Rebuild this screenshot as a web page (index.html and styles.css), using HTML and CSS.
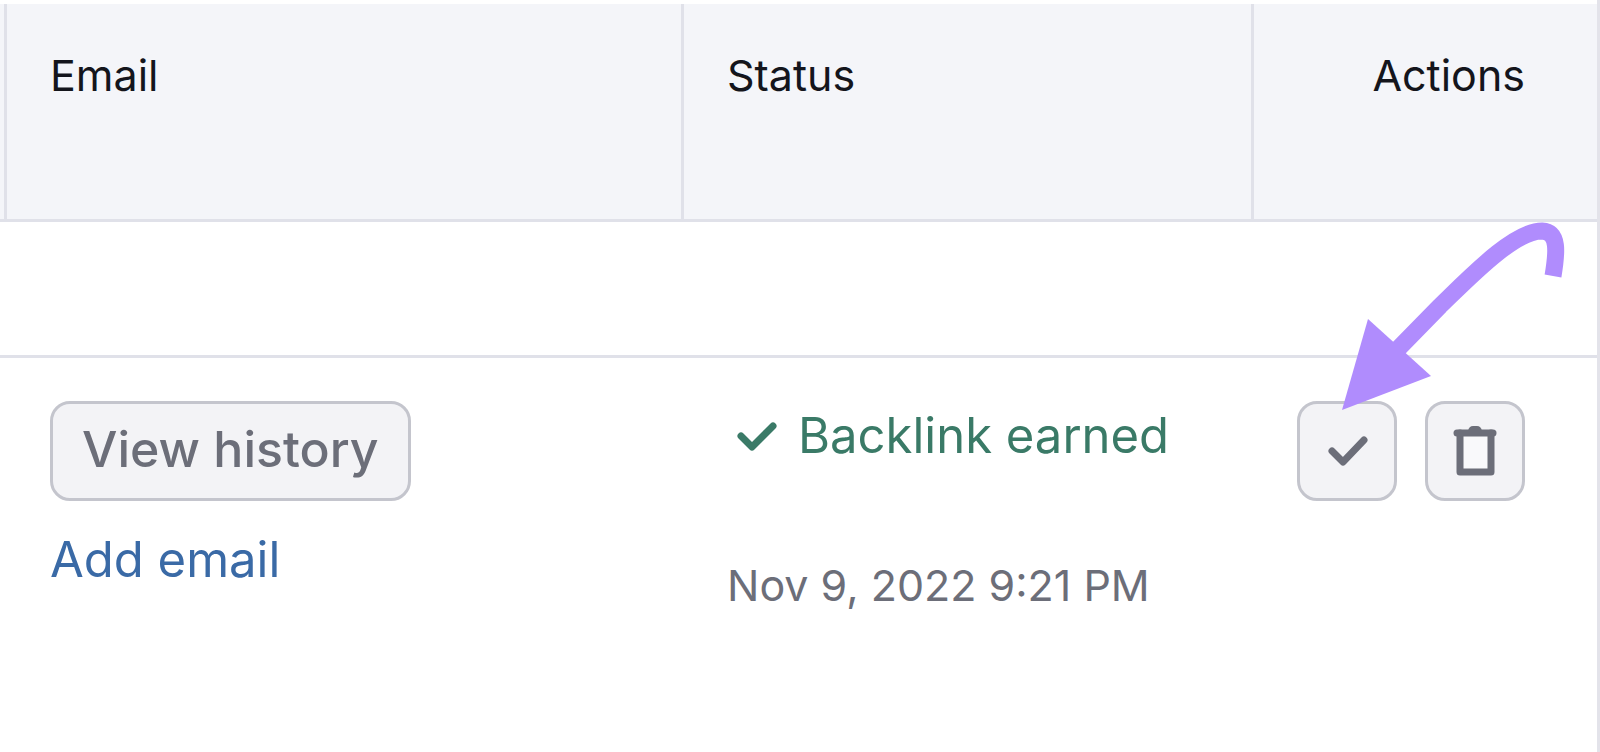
FILE: index.html
```html
<!DOCTYPE html>
<html lang="en">
<head>
  <meta charset="utf-8">
  <title>Prospects</title>
  <link rel="stylesheet" href="styles.css">
</head>
<body>
  <main class="panel">
    <table class="prospects">
      <colgroup>
        <col class="col-edge">
        <col>
        <col class="col-status">
        <col class="col-actions">
      </colgroup>
      <thead>
        <tr>
          <td class="edge"></td>
          <th scope="col">Email</th>
          <th scope="col">Status</th>
          <th scope="col" class="align-end">Actions</th>
        </tr>
      </thead>
      <tbody>
        <tr class="spacer-row">
          <td colspan="4"></td>
        </tr>
        <tr class="data-row">
          <td class="edge"></td>
          <td>
            <div class="stack email-stack">
              <button type="button" class="btn">View history</button>
              <a class="link" href="#add-email">Add email</a>
            </div>
          </td>
          <td>
            <div class="stack status-stack">
              <div class="status">
                <svg class="status-icon" viewBox="0 0 56 60" aria-hidden="true">
                  <path d="M14 30 L25 41 L46 20"/>
                </svg>
                <span>Backlink earned</span>
              </div>
              <time class="date" datetime="2022-11-09T21:21">Nov 9, 2022 9:21 PM</time>
            </div>
          </td>
          <td>
            <div class="actions">
              <button type="button" class="btn btn-icon" aria-label="Mark as earned">
                <svg class="icon" viewBox="0 0 60 60" aria-hidden="true">
                  <path class="check" d="M15 30 L26 41 L47 19"/>
                </svg>
              </button>
              <button type="button" class="btn btn-icon" aria-label="Delete">
                <svg class="icon" viewBox="0 0 60 60" aria-hidden="true">
                  <path class="trash-body" d="M15 12 V51 H46 V12"/>
                  <path class="trash-lid" d="M12 12 H48"/>
                  <path class="trash-handle" d="M23 10 Q24 5 28 5 H32 Q36 5 37 10 Z"/>
                </svg>
              </button>
              <svg class="arrow" viewBox="0 0 228 192" aria-hidden="true">
                <path class="arrow-stem" d="M57 130 L100 86 C130 57 174 11 202 11 C219 12 217 32 213 56"/>
                <path class="arrow-head" d="M2 190 L28 99 L91 156 Z"/>
              </svg>
            </div>
          </td>
        </tr>
      </tbody>
    </table>
  </main>
</body>
</html>
```
FILE: styles.css
```css
* {
  box-sizing: border-box;
}

body {
  margin: 0;
  background: #fff;
  color: #14151c;
  font-family: Inter, "Liberation Sans", sans-serif;
  font-size: 43px;
  line-height: 52px;
}

.panel {
  min-height: 100vh;
  padding-top: 4px;
  border-right: 3px solid #e3e3ea;
}

.prospects {
  width: 100%;
  table-layout: fixed;
  border-collapse: separate;
  border-spacing: 0;
}

.col-edge {
  width: 7px;
}

.col-status {
  width: 570px;
}

.col-actions {
  width: 343px;
}

th,
td {
  padding: 0 43px;
  text-align: left;
  vertical-align: top;
  font-weight: 400;
}

.prospects .edge {
  padding: 0;
}

thead th,
thead td {
  background: #f4f5f9;
  border-right: 3px solid #e0e1e9;
  border-bottom: 3px solid #e0e1e9;
}

thead th {
  height: 218px;
  padding-top: 45px;
}

thead th:last-child {
  border-right: 0;
}

.prospects .align-end {
  padding-right: 72px;
  text-align: right;
}

.spacer-row td {
  height: 136px;
  border-bottom: 3px solid #e0e1e9;
}

.data-row td {
  padding-top: 43px;
}

.stack {
  display: flex;
  flex-direction: column;
  align-items: flex-start;
}

.email-stack {
  gap: 29px;
}

.status-stack {
  gap: 93px;
  padding-top: 5px;
}

.btn {
  height: 100px;
  padding: 0 29px 4px;
  border: 3px solid #c4c5cd;
  border-radius: 20px;
  background: #f3f3f6;
  color: #6c6e79;
  font-family: inherit;
  font-size: 50px;
  font-weight: 500;
  line-height: 60px;
}

.btn-icon {
  display: flex;
  align-items: center;
  justify-content: center;
  width: 100px;
  padding: 0;
}

.icon {
  width: 60px;
  height: 60px;
}

.check,
.trash-body,
.trash-lid {
  fill: none;
  stroke: #6c6e79;
  stroke-width: 7;
  stroke-linecap: round;
  stroke-linejoin: round;
}

.trash-body {
  fill: #f9f9fb;
}

.trash-handle {
  fill: #6c6e79;
}

.link {
  color: #3a6aa6;
  font-size: 49px;
  line-height: 60px;
  text-decoration: none;
}

.status {
  display: flex;
  align-items: center;
  gap: 15px;
  color: #3a7a67;
  font-size: 49px;
  line-height: 60px;
  white-space: nowrap;
}

.status-icon {
  width: 56px;
  height: 60px;
  fill: none;
  stroke: currentColor;
  stroke-width: 7;
  stroke-linecap: round;
  stroke-linejoin: round;
}

.date {
  color: #6c6e79;
  white-space: nowrap;
}

.data-row td:last-child {
  padding-right: 72px;
}

.actions {
  position: relative;
  display: flex;
  justify-content: flex-end;
  gap: 28px;
}

.arrow {
  position: absolute;
  top: -181px;
  right: -43px;
  width: 228px;
  height: 192px;
  pointer-events: none;
}

.arrow-stem {
  fill: none;
  stroke: #b08cfd;
  stroke-width: 17;
}

.arrow-head {
  fill: #b08cfd;
}
```
